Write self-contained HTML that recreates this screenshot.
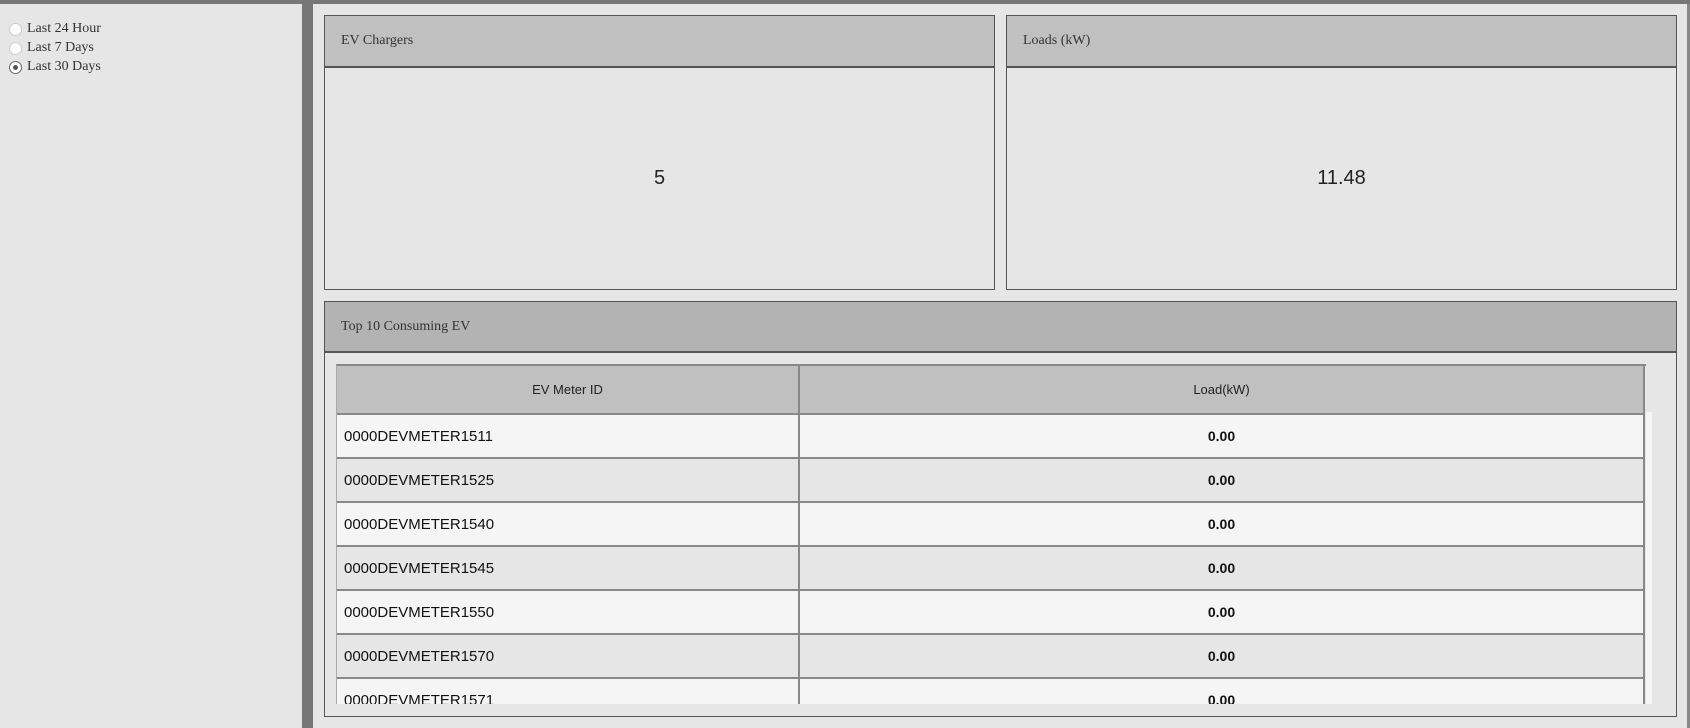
<!DOCTYPE html>
<html><head><style>
*{margin:0;padding:0;box-sizing:border-box}
html,body{width:1690px;height:728px;overflow:hidden}
body{background:#e6e6e6;position:relative;font-family:"Liberation Serif",serif;color:#333}
.abs{position:absolute}
.topbar{left:0;top:0;width:1690px;height:4px;background:#777}
.side{left:0;top:4px;width:302px;height:724px;background:#e6e6e6}
.div{left:302px;top:4px;width:11px;height:724px;background:#777}
.rb{left:1687px;top:4px;width:3px;height:724px;background:#888}
.radio{left:9px;font-size:14px;display:flex;align-items:center;color:#333}
.radio i{display:inline-block;width:13px;height:13px;border-radius:50%;background:#fff;border:1px solid #ccc;margin-right:5px;position:relative}
.radio i.on{border:1px solid #666}
.radio i.on:after{content:"";position:absolute;left:3px;top:3px;width:5px;height:5px;border-radius:50%;background:#555}
.panel{border:1px solid #555;background:#e6e6e6}
.ph{height:52px;background:#c0c0c0;border-bottom:2px solid #555;font-size:14px;padding-left:16px;line-height:50px}
.num{font-family:"Liberation Sans",sans-serif;font-size:20px;color:#222;text-align:center;position:absolute;width:100%;top:151px}
table{border-collapse:collapse;font-family:"Liberation Sans",sans-serif;width:1308px;table-layout:fixed}
th{background:#c0c0c0;height:48px;font-weight:normal;font-size:13px;color:#222;border-bottom:2px solid #888;border-right:2px solid #888}
td{height:44px;font-size:15px;color:#111;border-bottom:2px solid #888;border-right:2px solid #888}
td.id{padding-left:7px}
td.v{text-align:center;font-weight:bold;font-size:14px}
tr.a td{background:#f5f5f5}
tr.b td{background:#e6e6e6}
</style></head><body>
<div class="abs topbar"></div>
<div class="abs side"></div>
<div class="abs radio" style="top:21px"><i></i>Last 24 Hour</div>
<div class="abs radio" style="top:40px"><i></i>Last 7 Days</div>
<div class="abs radio" style="top:59px"><i class="on"></i>Last 30 Days</div>
<div class="abs div"></div>
<div class="abs rb"></div>

<div class="abs panel" style="left:324px;top:15px;width:671px;height:275px">
 <div class="ph">EV Chargers</div>
 <div class="num">5</div>
</div>
<div class="abs panel" style="left:1006px;top:15px;width:671px;height:275px">
 <div class="ph">Loads (kW)</div>
 <div class="num">11.48</div>
</div>

<div class="abs panel" style="left:324px;top:301px;width:1353px;height:416px;overflow:hidden">
 <div class="ph" style="background:#b3b3b3;height:51px;line-height:50px">Top 10 Consuming EV</div>
</div>
<div class="abs" style="left:1646px;top:412px;width:6px;height:292px;background:#f5f5f5"></div>
<div class="abs" style="left:336px;top:364px;width:1310px;height:340px;overflow:hidden;border-top:2px solid #888;border-left:1px solid #aaa">
<table>
<colgroup><col style="width:462px"><col></colgroup>
<tr><th>EV Meter ID</th><th>Load(kW)</th></tr>
<tr class="a"><td class="id">0000DEVMETER1511</td><td class="v">0.00</td></tr>
<tr class="b"><td class="id">0000DEVMETER1525</td><td class="v">0.00</td></tr>
<tr class="a"><td class="id">0000DEVMETER1540</td><td class="v">0.00</td></tr>
<tr class="b"><td class="id">0000DEVMETER1545</td><td class="v">0.00</td></tr>
<tr class="a"><td class="id">0000DEVMETER1550</td><td class="v">0.00</td></tr>
<tr class="b"><td class="id">0000DEVMETER1570</td><td class="v">0.00</td></tr>
<tr class="a"><td class="id">0000DEVMETER1571</td><td class="v">0.00</td></tr>
</table>
</div>
</body></html>
